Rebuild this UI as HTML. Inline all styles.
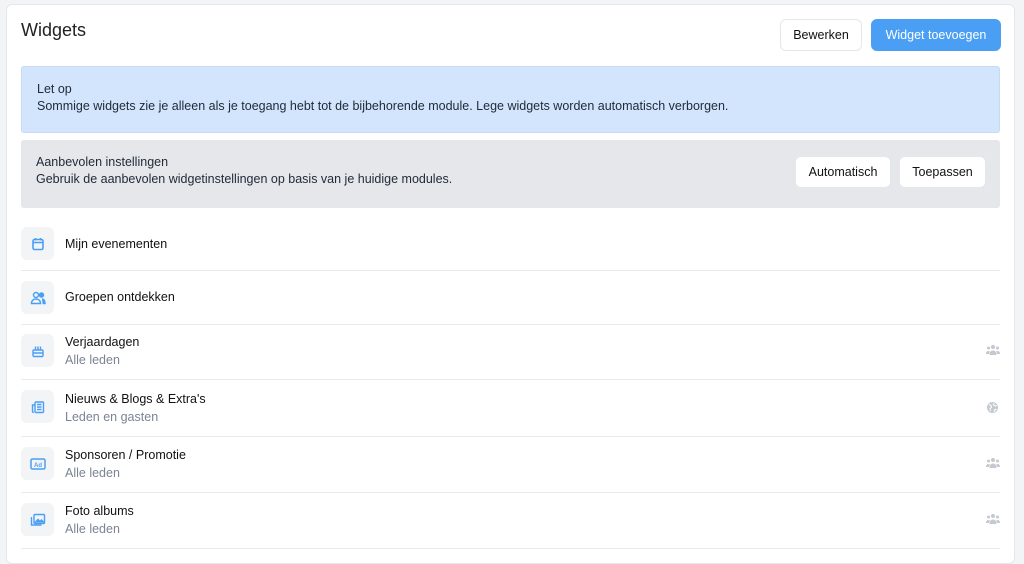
<!DOCTYPE html>
<html><head><meta charset="utf-8"><style>
*{box-sizing:border-box;margin:0;padding:0}
body{width:1024px;height:554px;background:#f3f4f6;font-family:"Liberation Sans",sans-serif;color:#1f2937;overflow:hidden;position:relative}
.card{position:absolute;left:6px;top:4px;width:1009px;height:560px;background:#fff;border:1px solid #e5e7eb;border-radius:6px}
h1{position:absolute;left:21px;top:20px;font-size:18px;font-weight:normal;color:#222}
.btn{position:absolute;height:32px;border-radius:6px;font-size:12.5px;display:flex;align-items:center;justify-content:center;background:#fff;border:1px solid #e5e7eb;color:#111}
.box{position:absolute;left:21px;width:979px;border-radius:3px;font-size:12.5px;line-height:17px;padding-left:15px}
.ico{position:absolute;left:21px;width:33px;height:33px;border-radius:6px;background:#f3f4f6;display:flex;align-items:center;justify-content:center}
.t{position:absolute;left:65px;font-size:12.5px;color:#111}
.s{position:absolute;left:65px;font-size:12.5px;color:#7b8494}
.hr{position:absolute;left:21px;width:979px;height:1px;background:#e8eaee}
.r{position:absolute;left:986px}
</style></head><body>
<div class="card"></div>
<h1>Widgets</h1>
<div class="btn" style="left:780px;top:19px;width:82px">Bewerken</div>
<div class="btn" style="left:871px;top:19px;width:130px;background:#4a9ff5;border-color:#4a9ff5;color:#fff">Widget toevoegen</div>
<div class="box" style="top:66px;height:67px;background:#d3e5fd;border:1px solid #c5daf7;padding-top:14px">Let op<br>Sommige widgets zie je alleen als je toegang hebt tot de bijbehorende module. Lege widgets worden automatisch verborgen.</div>
<div class="box" style="top:140px;height:68px;background:#e5e7eb;padding-top:14px">Aanbevolen instellingen<br>Gebruik de aanbevolen widgetinstellingen op basis van je huidige modules.</div>
<div class="btn" style="left:795px;top:156px;width:96px">Automatisch</div>
<div class="btn" style="left:899px;top:156px;width:87px">Toepassen</div>

<div class="ico" style="top:227px"><svg width="14" height="14" viewBox="0 0 14 14" fill="none" stroke="#4a9ff5" stroke-width="1.6"><rect x="2" y="2.5" width="10" height="10" rx="1.5"/><path d="M2 5.5h10M4.5 1v2.5M9.5 1v2.5"/></svg></div>
<div class="t" style="top:237px">Mijn evenementen</div>
<div class="hr" style="top:270px"></div>

<div class="ico" style="top:281px"><svg width="16" height="14" viewBox="0 0 16 14" fill="none" stroke="#4a9ff5" stroke-width="1.5"><circle cx="6" cy="4" r="2.5"/><path d="M1.5 12.5c0-3 2-4.5 4.5-4.5s4.5 1.5 4.5 4.5z"/><circle cx="11.5" cy="4" r="2" fill="#4a9ff5"/><path d="M12 8c1.5 0 3 1.2 3 4.5h-2.5" fill="#4a9ff5"/></svg></div>
<div class="t" style="top:290px">Groepen ontdekken</div>
<div class="hr" style="top:324px"></div>

<div class="ico" style="top:334px"><svg width="14" height="14" viewBox="0 0 14 14" fill="none" stroke="#4a9ff5" stroke-width="1.4"><rect x="2" y="6" width="10" height="6.5" rx="1"/><path d="M2 9h10M4.5 2.5v3M7 2.5v3M9.5 2.5v3"/></svg></div>
<div class="t" style="top:335px">Verjaardagen</div>
<div class="s" style="top:353px">Alle leden</div>
<div class="hr" style="top:379px"></div>

<div class="ico" style="top:390px"><svg width="14" height="14" viewBox="0 0 14 14" fill="none" stroke="#4a9ff5" stroke-width="1.4"><rect x="4" y="2" width="8.5" height="10.5" rx="1"/><path d="M4 5H1.5v6c0 1 .7 1.5 1.3 1.5M6 4.5h4.5M6 7h4.5M6 9.5h4.5"/></svg></div>
<div class="t" style="top:392px">Nieuws &amp; Blogs &amp; Extra's</div>
<div class="s" style="top:410px">Leden en gasten</div>
<div class="hr" style="top:436px"></div>

<div class="ico" style="top:447px"><svg width="16" height="12" viewBox="0 0 16 12"><rect x="1" y="1" width="14" height="10" rx="1.5" fill="none" stroke="#4a9ff5" stroke-width="1.5"/><text x="8" y="8.8" font-size="6" font-weight="bold" fill="#4a9ff5" text-anchor="middle" font-family="Liberation Sans">Ad</text></svg></div>
<div class="t" style="top:448px">Sponsoren / Promotie</div>
<div class="s" style="top:466px">Alle leden</div>
<div class="hr" style="top:492px"></div>

<div class="ico" style="top:503px"><svg width="16" height="14" viewBox="0 0 16 14" fill="none" stroke="#4a9ff5" stroke-width="1.4"><rect x="4" y="1.5" width="10.5" height="9" rx="1"/><path d="M1.5 4v8h10"/><path d="M5 9.5l3-3 2 2 1.5-1.5 2.5 2.5" fill="#4a9ff5"/></svg></div>
<div class="t" style="top:504px">Foto albums</div>
<div class="s" style="top:522px">Alle leden</div>
<div class="hr" style="top:548px"></div>

<svg class="r" style="top:344px" width="14" height="12" viewBox="0 0 14 12" fill="#c4c8cf"><circle cx="7" cy="3" r="2"/><circle cx="2.5" cy="4" r="1.5"/><circle cx="11.5" cy="4" r="1.5"/><path d="M3.5 11c0-3 1.5-4.5 3.5-4.5s3.5 1.5 3.5 4.5zM0 10c0-2 1-3 2.5-3 .5 0 1 .1 1.3.4L3 10zM14 10c0-2-1-3-2.5-3-.5 0-1 .1-1.3.4L11 10z"/></svg>
<svg class="r" style="top:401px" width="13" height="13" viewBox="0 0 13 13"><circle cx="6.5" cy="6.5" r="5.5" fill="#c4c8cf"/><path d="M3 3.5l2 1 .5 2-1.5 1 .5 2.5M8 2l-.5 2 2 1 1.5-.5M8 11l.5-2 2-1" stroke="#fff" stroke-width="1" fill="none"/></svg>
<svg class="r" style="top:457px" width="14" height="12" viewBox="0 0 14 12" fill="#c4c8cf"><circle cx="7" cy="3" r="2"/><circle cx="2.5" cy="4" r="1.5"/><circle cx="11.5" cy="4" r="1.5"/><path d="M3.5 11c0-3 1.5-4.5 3.5-4.5s3.5 1.5 3.5 4.5zM0 10c0-2 1-3 2.5-3 .5 0 1 .1 1.3.4L3 10zM14 10c0-2-1-3-2.5-3-.5 0-1 .1-1.3.4L11 10z"/></svg>
<svg class="r" style="top:513px" width="14" height="12" viewBox="0 0 14 12" fill="#c4c8cf"><circle cx="7" cy="3" r="2"/><circle cx="2.5" cy="4" r="1.5"/><circle cx="11.5" cy="4" r="1.5"/><path d="M3.5 11c0-3 1.5-4.5 3.5-4.5s3.5 1.5 3.5 4.5zM0 10c0-2 1-3 2.5-3 .5 0 1 .1 1.3.4L3 10zM14 10c0-2-1-3-2.5-3-.5 0-1 .1-1.3.4L11 10z"/></svg>
</body></html>
